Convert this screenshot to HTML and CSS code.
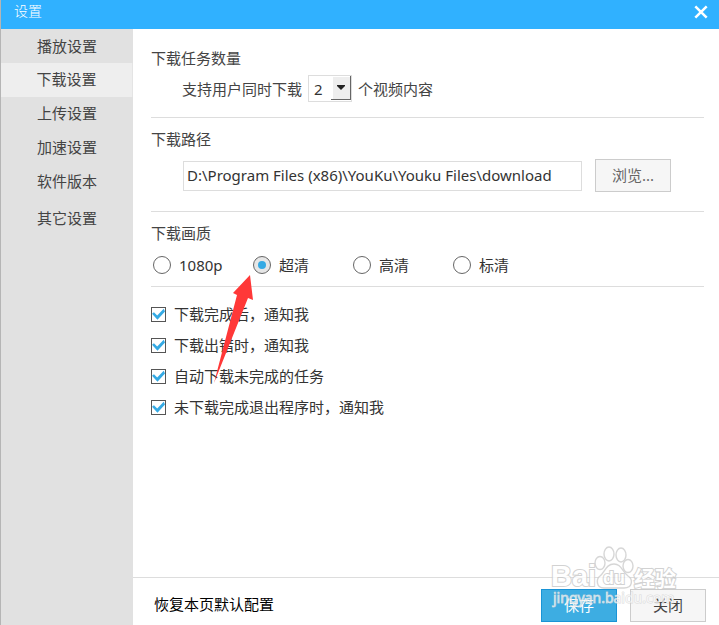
FILE: index.html
```html
<!DOCTYPE html>
<html lang="zh-CN">
<head>
<meta charset="utf-8">
<title>设置</title>
<link rel="stylesheet" href="styles.css">
</head>
<body>
<div class="window">
  <header class="titlebar">
    <h1 class="title">设置</h1>
    <button class="close" type="button" aria-label="关闭窗口">
      <svg width="14" height="14" viewBox="0 0 14 14"><path d="M1.3 1.3 12.7 12.7M12.7 1.3 1.3 12.7" fill="none" stroke="#fff" stroke-width="2.5"/></svg>
    </button>
  </header>
  <div class="body">
    <nav class="sidebar">
      <a class="nav-item" href="#play">播放设置</a>
      <a class="nav-item active" href="#download" aria-current="page">下载设置</a>
      <a class="nav-item" href="#upload">上传设置</a>
      <a class="nav-item" href="#speed">加速设置</a>
      <a class="nav-item" href="#version">软件版本</a>
      <a class="nav-item other" href="#other">其它设置</a>
    </nav>
    <form class="main">
      <div class="content">
        <section class="section tasks">
          <h2 class="heading">下载任务数量</h2>
          <div class="row count-row">
            <label for="count">支持用户同时下载</label>
            <span class="select-box">
              <select class="select" id="count"><option>1</option><option selected>2</option><option>3</option></select>
              <span class="drop"><svg width="8" height="5" viewBox="0 0 8 5"><path d="M0 0H8V1L4 5 0 1Z" fill="#222"/></svg></span>
            </span>
            <span>个视频内容</span>
          </div>
        </section>
        <section class="section path">
          <h2 class="heading"><label for="path">下载路径</label></h2>
          <div class="row path-row">
            <input class="path-input" id="path" type="text" value="D:\Program Files (x86)\YouKu\Youku Files\download">
            <button class="button browse" type="button">浏览...</button>
          </div>
        </section>
        <section class="section quality">
          <h2 class="heading">下载画质</h2>
          <div class="row radio-row">
            <label class="choice"><input class="radio" type="radio" name="quality">1080p</label>
            <label class="choice"><input class="radio" type="radio" name="quality" checked>超清</label>
            <label class="choice"><input class="radio" type="radio" name="quality">高清</label>
            <label class="choice"><input class="radio" type="radio" name="quality">标清</label>
          </div>
        </section>
        <section class="checks">
          <label class="choice"><input class="check" type="checkbox" checked>下载完成后，通知我</label>
          <label class="choice"><input class="check" type="checkbox" checked>下载出错时，通知我</label>
          <label class="choice"><input class="check" type="checkbox" checked>自动下载未完成的任务</label>
          <label class="choice"><input class="check" type="checkbox" checked>未下载完成退出程序时，通知我</label>
        </section>
        <svg class="pointer" width="42" height="110" viewBox="0 0 42 110"><path d="M38 0 41 25 36 23 2 108 25 20 21 18Z" fill="#ff3838"/></svg>
      </div>
      <footer class="footer">
        <a class="restore" href="#restore">恢复本页默认配置</a>
        <button class="button save" type="submit">保存</button>
        <button class="button" type="button">关闭</button>
        <svg class="watermark" width="132" height="64" viewBox="0 0 132 64">
          <g fill="#fff" stroke="#cdcdcd" stroke-width="1.4">
            <ellipse cx="50" cy="18" rx="5" ry="6.5"/>
            <ellipse cx="59" cy="9" rx="5" ry="7"/>
            <ellipse cx="71" cy="10" rx="5" ry="7"/>
            <ellipse cx="78" cy="21" rx="5" ry="6.5"/>
            <path d="M64 19C56 19 55 27 50 31C46 34 46 43 54 43H74C83 43 83 34 78 31C72 26 71 19 64 19Z"/>
          </g>
          <g class="mark">
            <text class="mark-bai" x="1" y="41">Bai</text>
            <text class="mark-du" x="53" y="39">du</text>
            <text class="mark-cn" x="84" y="41">经验</text>
          </g>
          <text class="mark-url" x="3" y="58">jingyan.baidu.com</text>
        </svg>
      </footer>
    </form>
  </div>
</div>
</body>
</html>
```

FILE: styles.css
```css
* { box-sizing: border-box; }

body {
  margin: 0;
  font: 15px/22px "Noto Sans", "Noto Sans CJK SC", sans-serif;
  color: #333;
  background: #fff;
}

button, input, select { font: inherit; color: inherit; margin: 0; }

a { color: inherit; text-decoration: none; }

.window {
  display: flex;
  flex-direction: column;
  min-height: 100vh;
  border-left: 1px solid #b5b5b5;
}

.titlebar {
  display: flex;
  justify-content: space-between;
  align-items: center;
  height: 29px;
  padding: 0 11px 0 13px;
  background: #30b1ff;
  color: #fff;
}

.title {
  margin: 0;
  padding-bottom: 8px;
  font-size: 14px;
  font-weight: 300;
}

.close {
  display: flex;
  padding: 0 0 5px;
  border: 0;
  background: none;
}

.body { display: flex; flex: 1; }

.sidebar {
  display: flex;
  flex-direction: column;
  width: 132px;
  background: #e1e1e1;
  color: #444;
}

.nav-item {
  padding: 5px 0 7px;
  text-align: center;
}

.nav-item:first-child { padding: 6px 0; }

.nav-item.active {
  background: #eee;
  border-right: 1px solid #e4e4e4;
}

.nav-item.other { margin-top: 3px; }

.main {
  display: flex;
  flex: 1;
  flex-direction: column;
}

.content {
  position: relative;
  flex: 1;
  padding: 8px 15px 0 18px;
}

.section {
  padding-top: 10px;
  border-bottom: 1px solid #ddd;
}

.tasks { padding-bottom: 15px; }
.path { padding-bottom: 19px; }
.quality { padding-bottom: 10px; }

.heading {
  margin: 0 0 9px;
  font-size: 15px;
  font-weight: 400;
  color: #444;
}

.row { display: flex; align-items: center; }

.count-row {
  gap: 6px;
  margin-top: -3px;
  padding-left: 31px;
  color: #444;
}

.select-box {
  display: flex;
  position: relative;
  width: 44px;
  height: 27px;
}

.select {
  width: 100%;
  padding: 0 5px;
  appearance: none;
  border: 1px solid #ddd;
  border-radius: 0;
  background: #fff;
  color: #333;
}

.drop {
  position: absolute;
  top: 1px;
  right: 1px;
  display: grid;
  place-items: center;
  width: 20px;
  height: 24px;
  border: solid #666;
  border-width: 0 1px 1px 0;
  background: #eee;
  box-shadow: inset 2px 1px #fff;
  pointer-events: none;
}

.path-row { gap: 13px; padding-left: 32px; }

.path-input {
  width: 399px;
  height: 30px;
  padding: 0 3px 2px;
  border: 1px solid #ddd;
  background: #fff;
}

.button {
  width: 76px;
  height: 33px;
  padding: 0 0 2px;
  border: 1px solid #ccc;
  background: #f6f6f6;
  color: #444;
}

.browse { color: #666; }

.radio-row { padding: 1px 0 0 2px; }

.radio-row .choice { width: 100px; }

.choice { display: flex; align-items: center; gap: 8px; }

.radio, .check {
  display: grid;
  place-items: center;
  flex: none;
  appearance: none;
  background: #fff;
}

.radio {
  width: 18px;
  height: 18px;
  border: 1px solid #666;
  border-radius: 50%;
}

.radio:checked { background: #e6e6e6; }

.radio:checked::after {
  content: "";
  width: 8px;
  height: 8px;
  border-radius: 50%;
  background: #35aae4;
}

.check {
  width: 15px;
  height: 15px;
  border: 1px solid #555;
}

.check:checked::after {
  content: "";
  width: 13px;
  height: 13px;
  background: #35aae4;
  clip-path: polygon(0 48%, 15% 36%, 40% 61%, 90% 10%, 100% 30%, 42% 94%);
}

.checks {
  display: flex;
  flex-direction: column;
  gap: 9px;
  padding-top: 16px;
}

.pointer {
  position: absolute;
  left: 79px;
  top: 246px;
  pointer-events: none;
}

.footer {
  position: relative;
  display: flex;
  align-items: center;
  gap: 13px;
  padding: 11px 13px 3px 21px;
  border-top: 1px solid #ddd;
}

.restore {
  margin-right: auto;
  padding-bottom: 3px;
  color: #000;
}

.button.save {
  border-color: #1a94d6;
  background: #3dade2;
  color: #fff;
}

.watermark {
  position: absolute;
  right: 37px;
  bottom: 16px;
  pointer-events: none;
  opacity: 0.8;
}

.mark {
  fill: #fff;
  stroke: #c8c8c8;
  stroke-width: 2px;
  paint-order: stroke;
}

.mark-bai { font: 700 29px "Liberation Sans", sans-serif; }
.mark-du { font: 700 18px "Liberation Sans", sans-serif; }
.mark-cn { font: 700 21px "Noto Sans CJK SC", sans-serif; }

.mark-url {
  font: 14px "Noto Sans", sans-serif;
  fill: #fff;
  fill-opacity: 0.8;
  stroke: #d4d4d4;
  stroke-width: 1px;
  paint-order: stroke;
}
```
